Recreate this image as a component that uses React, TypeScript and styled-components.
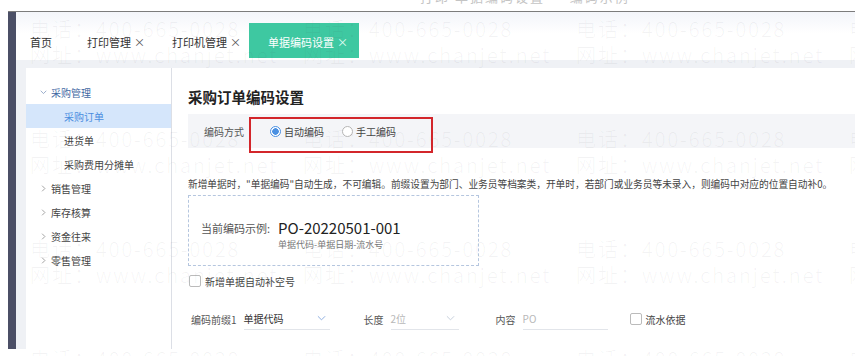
import React from 'react';
import styled, {createGlobalStyle} from 'styled-components';

const GlobalStyle = createGlobalStyle`
  html, body {
    margin: 0;
    padding: 0;
    background: #fff;
  }
  body {
    width: 855px;
    height: 356px;
    overflow: hidden;
    position: relative;
    font-family: "Noto Sans CJK SC", "Noto Sans", sans-serif;
    color: #444;
  }
`;

const TopStrip = styled.div`
  height: 11px;
  overflow: hidden;
  padding-left: 420px;
  > span {
    display: block;
    margin-top: -11px;
    font-size: 13px;
    line-height: 16px;
    color: #c4c4c4;
    letter-spacing: 2px;
  }
`;

const Frame = styled.div`
  margin-left: 8px;
  height: 337px;
  border-top: 1px solid #7c7c7c;
  display: flex;
`;

const Rail = styled.div`
  width: 8px;
  background: #4b4f66;
`;

const Main = styled.div`
  flex: 1;
  display: flex;
  flex-direction: column;
`;

const TabBar = styled.div`
  height: 48px;
  display: flex;
  align-items: flex-end;
  padding-bottom: 2px;
  box-sizing: border-box;
  background: linear-gradient(#f3f5fa, #fff 45%);
  > :first-child {
    padding-left: 14px;
    padding-right: 16px;
  }
`;

const Tab = styled.div<{active?: boolean}>`
  height: 35px;
  display: flex;
  align-items: center;
  padding: 3px ${p => (p.active ? 11 : 8)}px 0 19px;
  box-sizing: border-box;
  font-size: 11px;
  white-space: nowrap;
  color: ${p => (p.active ? '#fff' : '#333')};
  background: ${p => (p.active ? '#3ec8a1' : 'transparent')};
  .close {
    margin-left: 3px;
    font-size: 11px;
    color: ${p => (p.active ? '#e6fff6' : '#555')};
  }
`;

const Body = styled.div`
  flex: 1;
  display: flex;
  background: #eff1f5;
  padding: 8px 0 0 10px;
`;

const Sidebar = styled.div`
  width: 145px;
  background: #fff;
  border-right: 1px solid #dcdfe6;
  padding-top: 12px;
`;

const MenuItem = styled.div<{level: number; selected?: boolean; open?: boolean}>`
  height: 24px;
  display: flex;
  align-items: center;
  gap: 4px;
  font-size: 10px;
  padding-left: ${p => (p.level === 0 ? 14 : 38)}px;
  background: ${p => (p.selected ? '#d5e6fb' : 'transparent')};
  color: ${p => (p.selected ? '#4a8de0' : p.open ? '#3f68a3' : '#444')};
`;

const Content = styled.div`
  flex: 1;
  background: #fff;
  padding: 18px 0 0 16px;
  font-size: 10px;
`;

const Title = styled.div`
  font-size: 14.5px;
  font-weight: bold;
  color: #222;
  line-height: 22px;
`;

const Band = styled.div`
  position: relative;
  margin-top: 6px;
  height: 34px;
  background: #f4f5f8;
  display: flex;
  align-items: center;
  padding-left: 16px;
  color: #555;
`;

const BandLabel = styled.span`
  width: 66px;
`;

const Radio = styled.label<{checked?: boolean}>`
  display: flex;
  align-items: center;
  gap: 3px;
  margin-right: 18px;
  color: #444;
  &::before {
    content: '';
    width: 9px;
    height: 9px;
    border-radius: 50%;
    border: 1px solid ${p => (p.checked ? '#4a90e2' : '#b5b5b5')};
    background: ${p => (p.checked ? 'radial-gradient(#4a90e2 0 3px, #fff 3.5px)' : '#fff')};
  }
`;

const Highlight = styled.div`
  position: absolute;
  left: 61px;
  top: 3px;
  width: 184px;
  height: 36px;
  box-sizing: border-box;
  border: 2px solid #d3262b;
  pointer-events: none;
`;

const Note = styled.div`
  margin-top: 30px;
  font-size: 9.7px;
  line-height: 12px;
  color: #444;
  white-space: nowrap;
`;

const SampleBox = styled.div`
  margin-top: 5px;
  width: 291px;
  height: 71px;
  box-sizing: border-box;
  border: 1px dashed #b5c6df;
  padding: 22px 0 0 12px;
  display: flex;
`;

const SampleLabel = styled.div`
  font-size: 11px;
  line-height: 20px;
  color: #555;
  margin-right: 8px;
`;

const SampleValue = styled.div`
  display: flex;
  flex-direction: column;
  .code {
    font-size: 15px;
    line-height: 20px;
    color: #222;
  }
  .hint {
    font-size: 9px;
    line-height: 14px;
    color: #777;
  }
`;

const Check = styled.label`
  display: flex;
  align-items: center;
  gap: 4px;
  color: #444;
  &::before {
    content: '';
    width: 10px;
    height: 10px;
    border: 1px solid #bbb;
    border-radius: 2px;
    background: #fff;
  }
`;

const CheckRow = styled.div`
  margin-top: 9px;
  height: 12px;
  display: flex;
  align-items: center;
  padding-left: 1px;
`;

const FieldRow = styled.div`
  margin-top: 21px;
  display: flex;
  align-items: center;
  padding-left: 3px;
`;

const FieldLabel = styled.span<{gap: number}>`
  margin-left: ${p => p.gap}px;
  margin-right: 7px;
  color: #555;
`;

const Field = styled.div<{width: number; muted?: boolean}>`
  width: ${p => p.width}px;
  height: 22px;
  box-sizing: border-box;
  border-bottom: 1px solid #e2e5ea;
  display: flex;
  align-items: center;
  justify-content: space-between;
  padding-right: 4px;
  color: ${p => (p.muted ? '#b8b8b8' : '#333')};
`;

const CheckSpacer = styled.span`
  width: 22px;
`;

const Watermark = styled.div`
  position: absolute;
  left: 0;
  top: 0;
  width: 855px;
  height: 356px;
  overflow: hidden;
  padding: 16px 0 0 30px;
  box-sizing: border-box;
  display: grid;
  grid-template-columns: repeat(4, 273px);
  grid-auto-rows: 110px;
  pointer-events: none;
  font-size: 20px;
  line-height: 26px;
  letter-spacing: 2px;
  font-weight: 300;
  color: rgba(70, 70, 80, 0.065);
  white-space: nowrap;
`;

function Chevron({dir, color = '#888', size = 7}: {dir: 'down' | 'right'; color?: string; size?: number}) {
  const pts = dir === 'down' ? '1,2.5 5,6.5 9,2.5' : '3,1 7,5 3,9';
  return (
    <svg width={size} height={size} viewBox="0 0 10 10">
      <polyline points={pts} fill="none" stroke={color} strokeWidth="1.1" />
    </svg>
  );
}

const menu: {label: string; level: number; open?: boolean; selected?: boolean}[] = [
  {label: '采购管理', level: 0, open: true},
  {label: '采购订单', level: 1, selected: true},
  {label: '进货单', level: 1},
  {label: '采购费用分摊单', level: 1},
  {label: '销售管理', level: 0},
  {label: '库存核算', level: 0},
  {label: '资金往来', level: 0},
  {label: '零售管理', level: 0},
];

function App() {
  return (
    <>
      <GlobalStyle/>
      <TopStrip><span>打印  单据编码设置 · 编码示例</span></TopStrip>
      <Frame>
        <Rail/>
        <Main>
          <TabBar>
            <Tab>首页</Tab>
            <Tab>打印管理<span className="close">×</span></Tab>
            <Tab>打印机管理<span className="close">×</span></Tab>
            <Tab active>单据编码设置<span className="close">×</span></Tab>
          </TabBar>
          <Body>
            <Sidebar>
              {menu.map(m => (
                <MenuItem key={m.label} level={m.level} open={m.open} selected={m.selected}>
                  {m.level === 0 && <Chevron dir={m.open ? 'down' : 'right'} color={m.open ? '#7d95bb' : '#888'}/>}
                  {m.label}
                </MenuItem>
              ))}
            </Sidebar>
            <Content>
              <Title>采购订单编码设置</Title>
              <Band>
                <BandLabel>编码方式</BandLabel>
                <Radio checked>自动编码</Radio>
                <Radio>手工编码</Radio>
                <Highlight/>
              </Band>
              <Note>新增单据时，"单据编码"自动生成，不可编辑。前缀设置为部门、业务员等档案类，开单时，若部门或业务员等未录入，则编码中对应的位置自动补0。</Note>
              <SampleBox>
                <SampleLabel>当前编码示例:</SampleLabel>
                <SampleValue>
                  <span className="code">PO-20220501-001</span>
                  <span className="hint">单据代码-单据日期-流水号</span>
                </SampleValue>
              </SampleBox>
              <CheckRow>
                <Check>新增单据自动补空号</Check>
              </CheckRow>
              <FieldRow>
                <FieldLabel gap={0}>编码前缀1</FieldLabel>
                <Field width={86}>单据代码<Chevron dir="down" color="#8eaee0" size={9}/></Field>
                <FieldLabel gap={34}>长度</FieldLabel>
                <Field width={68} muted>2位<Chevron dir="down" color="#c6cfdc" size={9}/></Field>
                <FieldLabel gap={37}>内容</FieldLabel>
                <Field width={85} muted>PO</Field>
                <CheckSpacer/>
                <Check>流水依据</Check>
              </FieldRow>
            </Content>
          </Body>
        </Main>
      </Frame>
      <Watermark>
        {Array.from({length: 16}).map((_, i) => (
          <div key={i}>
            <div>电话：400-665-0028</div>
            <div>网址：www.chanjet.net</div>
          </div>
        ))}
      </Watermark>
    </>
  );
}

export default App;
